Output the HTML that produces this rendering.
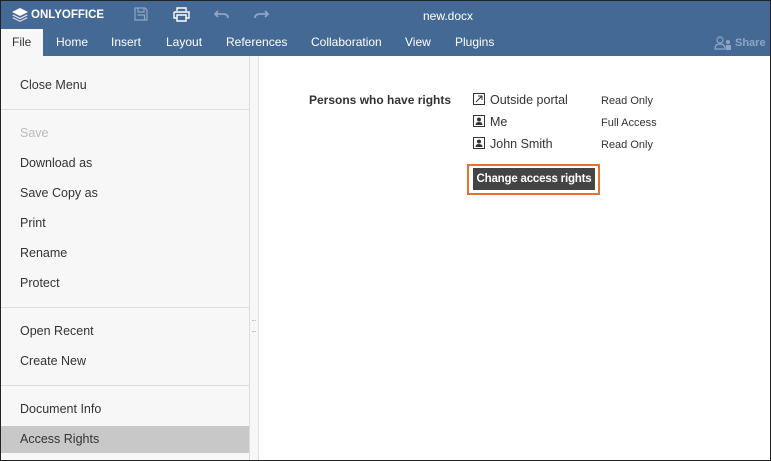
<!DOCTYPE html>
<html><head><style>
*{margin:0;padding:0;box-sizing:border-box}
body{width:771px;height:461px;overflow:hidden;font-family:"Liberation Sans",Arial,sans-serif;background:#fff;position:relative}
.frame{position:absolute;inset:0;border:1px solid #222;z-index:10;pointer-events:none}
.hdr{position:absolute;left:0;top:0;width:771px;height:56px;background:#446995}
.t{position:absolute;color:#fff;font-size:12px}
.tab{position:absolute;top:35px;color:#fff;font-size:12px}
.left{position:absolute;left:1px;top:56px;width:248px;height:404px;background:#f7f7f7}
.sb{position:absolute;left:249px;top:56px;width:10px;height:404px;background:#f7f7f7;border-left:1px solid #ddd;border-right:1px solid #ddd}
.mi{position:absolute;left:20px;font-size:12.5px;color:#333}
.sep{position:absolute;left:1px;width:248px;height:1px;background:#ddd}
.r{position:absolute;font-size:11px;color:#333}
</style></head><body>
<div class="frame"></div>
<div class="hdr">
 <svg style="position:absolute;left:12px;top:8px" width="16" height="14" viewBox="0 0 16 14"><path d="M8 0L16 4L8 8L0 4Z" fill="#fff"/><path d="M1.5 6.5L8 9.7L14.5 6.5L16 7.3L8 11.3L0 7.3Z" fill="#dde"/><path d="M1.5 9.3L8 12.5L14.5 9.3L16 10.1L8 14L0 10.1Z" fill="#ccd"/></svg>
 <div class="t" style="left:31px;top:9px;font-weight:bold;font-size:11.5px">ONLYOFFICE</div>
 <svg style="position:absolute;left:134px;top:7px" width="14" height="14" viewBox="0 0 14 14"><path d="M1 1H11L13 3V13H1Z M4 1V5H10V1 M3.5 8H10.5V13" fill="none" stroke="#8fa6c4" stroke-width="1.2"/></svg>
 <svg style="position:absolute;left:173px;top:7px" width="17" height="15" viewBox="0 0 17 15"><path d="M4 4V1H13V4 M1 5H16V11H13 M4 11H1V5 M4 8H13V14H4Z" fill="none" stroke="#fff" stroke-width="1.4"/></svg>
 <svg style="position:absolute;left:214px;top:9px" width="15" height="10" viewBox="0 0 15 10"><path d="M4 2L1 5L4 8 M1 5H9Q14 5 14 9" fill="none" stroke="#8fa6c4" stroke-width="1.8"/></svg>
 <svg style="position:absolute;left:254px;top:9px" width="15" height="10" viewBox="0 0 15 10"><path d="M11 2L14 5L11 8 M14 5H6Q1 5 1 9" fill="none" stroke="#8fa6c4" stroke-width="1.8"/></svg>
 <div class="t" style="left:423px;top:9px">new.docx</div>
 <div style="position:absolute;left:1px;top:29px;width:42px;height:27px;background:#f7f7f7"></div>
 <div class="tab" style="left:12px;color:#333">File</div>
 <div class="tab" style="left:56px">Home</div>
 <div class="tab" style="left:111px">Insert</div>
 <div class="tab" style="left:166px">Layout</div>
 <div class="tab" style="left:226px">References</div>
 <div class="tab" style="left:311px">Collaboration</div>
 <div class="tab" style="left:405px">View</div>
 <div class="tab" style="left:455px">Plugins</div>
 <svg style="position:absolute;left:714px;top:36px" width="20" height="14" viewBox="0 0 20 14"><circle cx="6" cy="4" r="3" fill="none" stroke="#8fa6c4" stroke-width="1.2"/><path d="M1 13Q1 8 6 8Q11 8 11 13Z" fill="none" stroke="#8fa6c4" stroke-width="1.2"/><circle cx="14" cy="6" r="2" fill="#8fa6c4"/><rect x="12" y="9" width="5" height="5" fill="#8fa6c4"/></svg>
 <div class="tab" style="left:735px;top:37px;color:#8fa6c4;font-size:11px;font-weight:bold">Share</div>
</div>
<div class="left"></div>
<div class="sb"><div style="position:absolute;left:2px;top:264px;width:4px;height:12px;border-top:1px dotted #bbb;border-bottom:1px dotted #bbb"></div></div>
<div class="mi" style="top:78px">Close Menu</div>
<div class="sep" style="top:109px"></div>
<div class="mi" style="top:126px;color:#bbb">Save</div>
<div class="mi" style="top:156px">Download as</div>
<div class="mi" style="top:186px">Save Copy as</div>
<div class="mi" style="top:216px">Print</div>
<div class="mi" style="top:246px">Rename</div>
<div class="mi" style="top:276px">Protect</div>
<div class="sep" style="top:307px"></div>
<div class="mi" style="top:324px">Open Recent</div>
<div class="mi" style="top:354px">Create New</div>
<div class="sep" style="top:385px"></div>
<div class="mi" style="top:402px">Document Info</div>
<div style="position:absolute;left:1px;top:426px;width:248px;height:27px;background:#c8c8c8"></div>
<div class="mi" style="top:432px">Access Rights</div>
<div class="r" style="left:309px;top:93px;font-weight:bold;font-size:12px">Persons who have rights</div>
<svg style="position:absolute;left:473px;top:93px" width="12" height="12" viewBox="0 0 12 12"><rect x=".5" y=".5" width="11" height="11" fill="none" stroke="#333"/><path d="M3 9L9 3M5 3H9V7" fill="none" stroke="#333"/></svg>
<svg style="position:absolute;left:473px;top:115px" width="12" height="12" viewBox="0 0 12 12"><rect x=".5" y=".5" width="11" height="11" fill="none" stroke="#333"/><circle cx="6" cy="4.5" r="2" fill="#333"/><path d="M2.5 10Q2.5 7 6 7Q9.5 7 9.5 10Z" fill="#333"/></svg>
<svg style="position:absolute;left:473px;top:137px" width="12" height="12" viewBox="0 0 12 12"><rect x=".5" y=".5" width="11" height="11" fill="none" stroke="#333"/><circle cx="6" cy="4.5" r="2" fill="#333"/><path d="M2.5 10Q2.5 7 6 7Q9.5 7 9.5 10Z" fill="#333"/></svg>
<div class="r" style="left:490px;top:93px;font-size:12.5px">Outside portal</div>
<div class="r" style="left:490px;top:115px;font-size:12.5px">Me</div>
<div class="r" style="left:490px;top:137px;font-size:12.5px">John Smith</div>
<div class="r" style="left:601px;top:95px">Read Only</div>
<div class="r" style="left:601px;top:117px">Full Access</div>
<div class="r" style="left:601px;top:139px">Read Only</div>
<div style="position:absolute;left:467px;top:164px;width:133px;height:31px;border:2px solid #e8702a"></div>
<div style="position:absolute;left:473px;top:168px;width:122px;height:22px;background:#444;color:#fff;font-size:11.5px;font-weight:bold;line-height:23px;text-align:center;letter-spacing:-0.2px">Change access rights</div>
</body></html>
